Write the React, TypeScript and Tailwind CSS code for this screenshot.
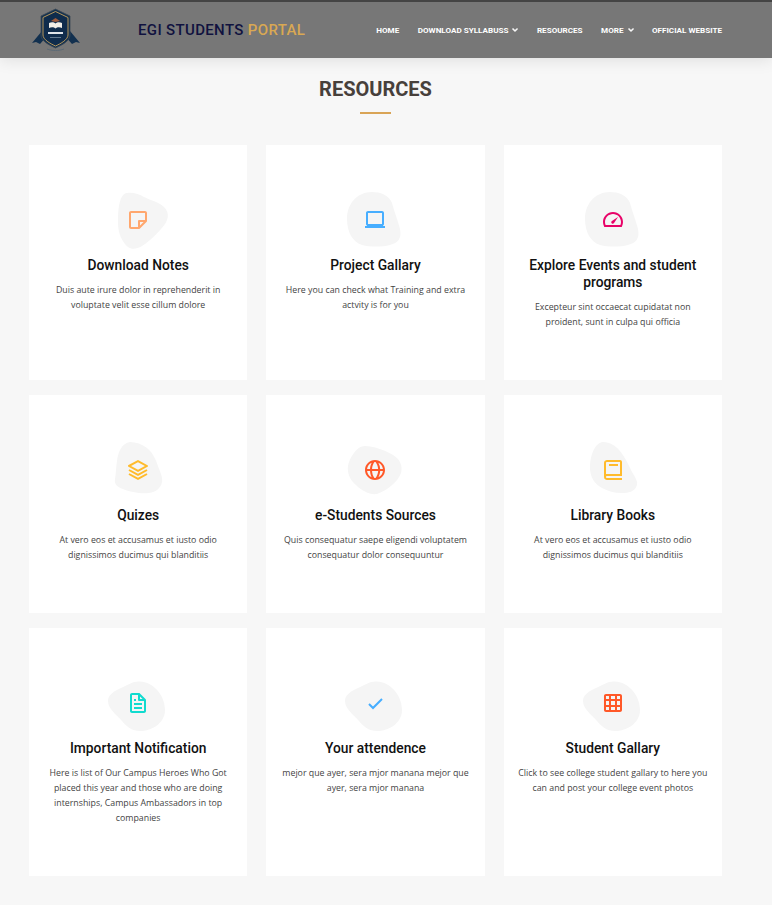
import { BiNote, BiLaptop, BiTachometer, BiLayer, BiGlobe, BiBook, BiFile, BiCheck, BiGrid } from "react-icons/bi";
import { FaChevronDown } from "react-icons/fa";
import type { ReactNode } from "react";

const blobA = "M24 8 C30 7 36 9 41 12 C47 15 56 17 61 22 C66 27 66 33 62 39 C57 46 47 56 39 61 C34 64 29 65 25 62 C19 57 15 48 15 38 C15 25 16 9 24 8Z";
const blobB = "M32 7 C40 7 49 10 52 18 C54 26 58 36 60 44 C62 53 58 58 50 60 C42 62 30 62 22 60 C12 57 7 46 7 34 C7 18 18 7 32 7Z";
const blobC = "M27 7 C33 7 39 9 44 13 C50 18 53 25 55 31 C57 37 60 42 59 47 C58 53 53 57 46 58 C38 59 27 57 20 54 C14 52 11 49 12 44 C13 38 13 32 14 26 C15 17 19 8 27 7Z";
const blobD = "M25 11 C33 11 45 15 53 20 C60 24 63 31 61 38 C58 47 46 56 37 59 C30 60 22 56 16 50 C10 45 7 38 8 31 C10 22 17 11 25 11Z";
const blobE = "M25 7 C32 7 38 11 42 16 C47 22 50 29 53 35 C56 41 60 45 59 50 C57 57 50 58 44 58 C36 58 30 56 24 53 C16 49 12 41 12 33 C12 22 16 8 25 7Z";
const blobF = "M5 33 C5 27 11 23 18 20 C25 17 30 13 37 13.500 C50 14 62 27 62 42 C62 55 49 63 37 63 C29 63 24 59 19 53 C14 47 5 41 5 33Z";

type Item = { blob: string; icon: ReactNode; title: ReactNode; text: ReactNode };

const items: Item[] = [
  { blob: blobA, icon: <BiNote size={24} className="text-[#ffa76e]" />, title: "Download Notes", text: <>Duis aute irure dolor in reprehenderit in<br />voluptate velit esse cillum dolore</> },
  { blob: blobB, icon: <BiLaptop size={24} className="text-[#47aeff]" />, title: "Project Gallary", text: <>Here you can check what Training and extra<br />actvity is for you</> },
  { blob: blobB, icon: <BiTachometer size={24} className="text-[#e80368]" />, title: <>Explore Events and student<br />programs</>, text: <>Excepteur sint occaecat cupidatat non<br />proident, sunt in culpa qui officia</> },
  { blob: blobC, icon: <BiLayer size={24} className="text-[#ffbb2c]" />, title: "Quizes", text: <>At vero eos et accusamus et iusto odio<br />dignissimos ducimus qui blanditiis</> },
  { blob: blobD, icon: <BiGlobe size={24} className="text-[#ff5828]" />, title: "e-Students Sources", text: <>Quis consequatur saepe eligendi voluptatem<br />consequatur dolor consequuntur</> },
  { blob: blobE, icon: <BiBook size={24} className="text-[#ffbb2c]" />, title: "Library Books", text: <>At vero eos et accusamus et iusto odio<br />dignissimos ducimus qui blanditiis</> },
  { blob: blobF, icon: <BiFile size={24} className="text-[#11dbcf]" />, title: "Important Notification", text: <>Here is list of Our Campus Heroes Who Got<br />placed this year and those who are doing<br />internships, Campus Ambassadors in top<br />companies</> },
  { blob: blobF, icon: <BiCheck size={24} className="text-[#47aeff]" />, title: "Your attendence", text: <>mejor que ayer, sera mjor manana mejor que<br />ayer, sera mjor manana</> },
  { blob: blobF, icon: <BiGrid size={24} className="text-[#ff5828]" />, title: "Student Gallary", text: <>Click to see college student gallary to here you<br />can and post your college event photos</> },
];

function Logo() {
  return (
    <svg width="50" height="44" viewBox="0 0 50 44" aria-hidden="true">
      <path d="M1 35 L11 23 L16 28 L9 36 L5 34Z" fill="#12304f" />
      <path d="M49 35 L39 23 L34 28 L41 36 L45 34Z" fill="#12304f" />
      <path d="M24.500 1 L39 8 L39 27 C39 33 31 37 24.500 40 C18 37 10 33 10 27 L10 8Z" fill="#12304f" stroke="#3d4a55" strokeWidth="0.8" />
      <path d="M24.500 3.500 L37 9.500 L37 27 C37 31.500 30 35.500 24.500 38 C19 35.500 12 31.500 12 27 L12 9.500Z" fill="#0f2c4c" stroke="#b8975a" strokeWidth="1" />
      <path d="M18 20 L18 15 C20 14 23 14 24.500 15.500 C26 14 29 14 31 15 L31 20 C29 19 26 19 24.500 20.500 C23 19 20 19 18 20Z" fill="#f2efe8" />
      <path d="M20 13 L24.500 10 L29 13 L24.500 14Z" fill="#9c5a3c" />
      <rect x="17" y="24" width="15" height="2" fill="#dfe5ea" />
      <rect x="19" y="29" width="11" height="1" fill="#5f7890" />
      <path d="M16 41 C21 43 28 43 33 41" fill="none" stroke="#5d6b76" strokeWidth="1" />
    </svg>
  );
}

function NavItem({ label, caret }: { label: string; caret?: boolean }) {
  return (
    <span className="flex items-center gap-[4px] text-[8.1px] leading-[10px] font-bold uppercase text-white font-['Roboto',sans-serif] whitespace-nowrap">
      {label}
      {caret && <FaChevronDown className="text-[6px]" stroke="currentColor" strokeWidth={50} />}
    </span>
  );
}

export default function App() {
  return (
    <div className="min-h-[905px] bg-[#f7f7f7] font-['Open_Sans',sans-serif]">
      <header className="flex h-[58px] items-center border-t-2 border-[#444444] bg-[#777777] pl-[31px] pr-[50px] shadow-[0_2px_15px_rgba(0,0,0,0.1)]">
        <Logo />
        <div className="ml-[57px] text-[15px] font-medium tracking-[0.35px] font-['Roboto',sans-serif] text-[#10123f] whitespace-nowrap">
          EGI STUDENTS <span className="text-[#d9a853]">PORTAL</span>
        </div>
        <nav className="ml-auto flex items-center gap-[18.5px]">
          <NavItem label="Home" />
          <NavItem label="Download Syllabuss" caret />
          <NavItem label="Resources" />
          <NavItem label="More" caret />
          <NavItem label="Official Website" />
        </nav>
      </header>

      <main className="pl-[29px] pr-[50px]">
        <div className="flex flex-col items-center pt-[18px]">
          <h2 className="text-[20px] font-bold leading-[26px] uppercase text-[#47403b] font-['Roboto',sans-serif]">Resources</h2>
          <div className="mt-[10px] h-[2px] w-[31px] bg-[#d9a456]" />
        </div>

        <div className="mt-[31px] grid grid-cols-3 gap-x-[19px] gap-y-[15px]">
          {items.map((item, i) => (
            <section key={i} className="flex flex-col items-center bg-white px-[15px] pt-[48px] pb-[50px] text-center">
              <div className="relative flex h-[54px] w-[54px] items-center justify-center">
                <svg className="absolute left-[-8px] top-[-8px]" width="70" height="70" viewBox="0 0 70 70" aria-hidden="true">
                  <path d={item.blob} fill="#f5f5f5" />
                </svg>
                <span className="relative">{item.icon}</span>
              </div>
              <h3 className="mt-[10px] text-[13.8px] font-medium leading-[17px] text-[#111111] font-['Roboto',sans-serif]">{item.title}</h3>
              <p className="mt-[9px] text-[8.8px] leading-[15px] text-[#444444] whitespace-nowrap">{item.text}</p>
            </section>
          ))}
        </div>
      </main>
    </div>
  );
}
